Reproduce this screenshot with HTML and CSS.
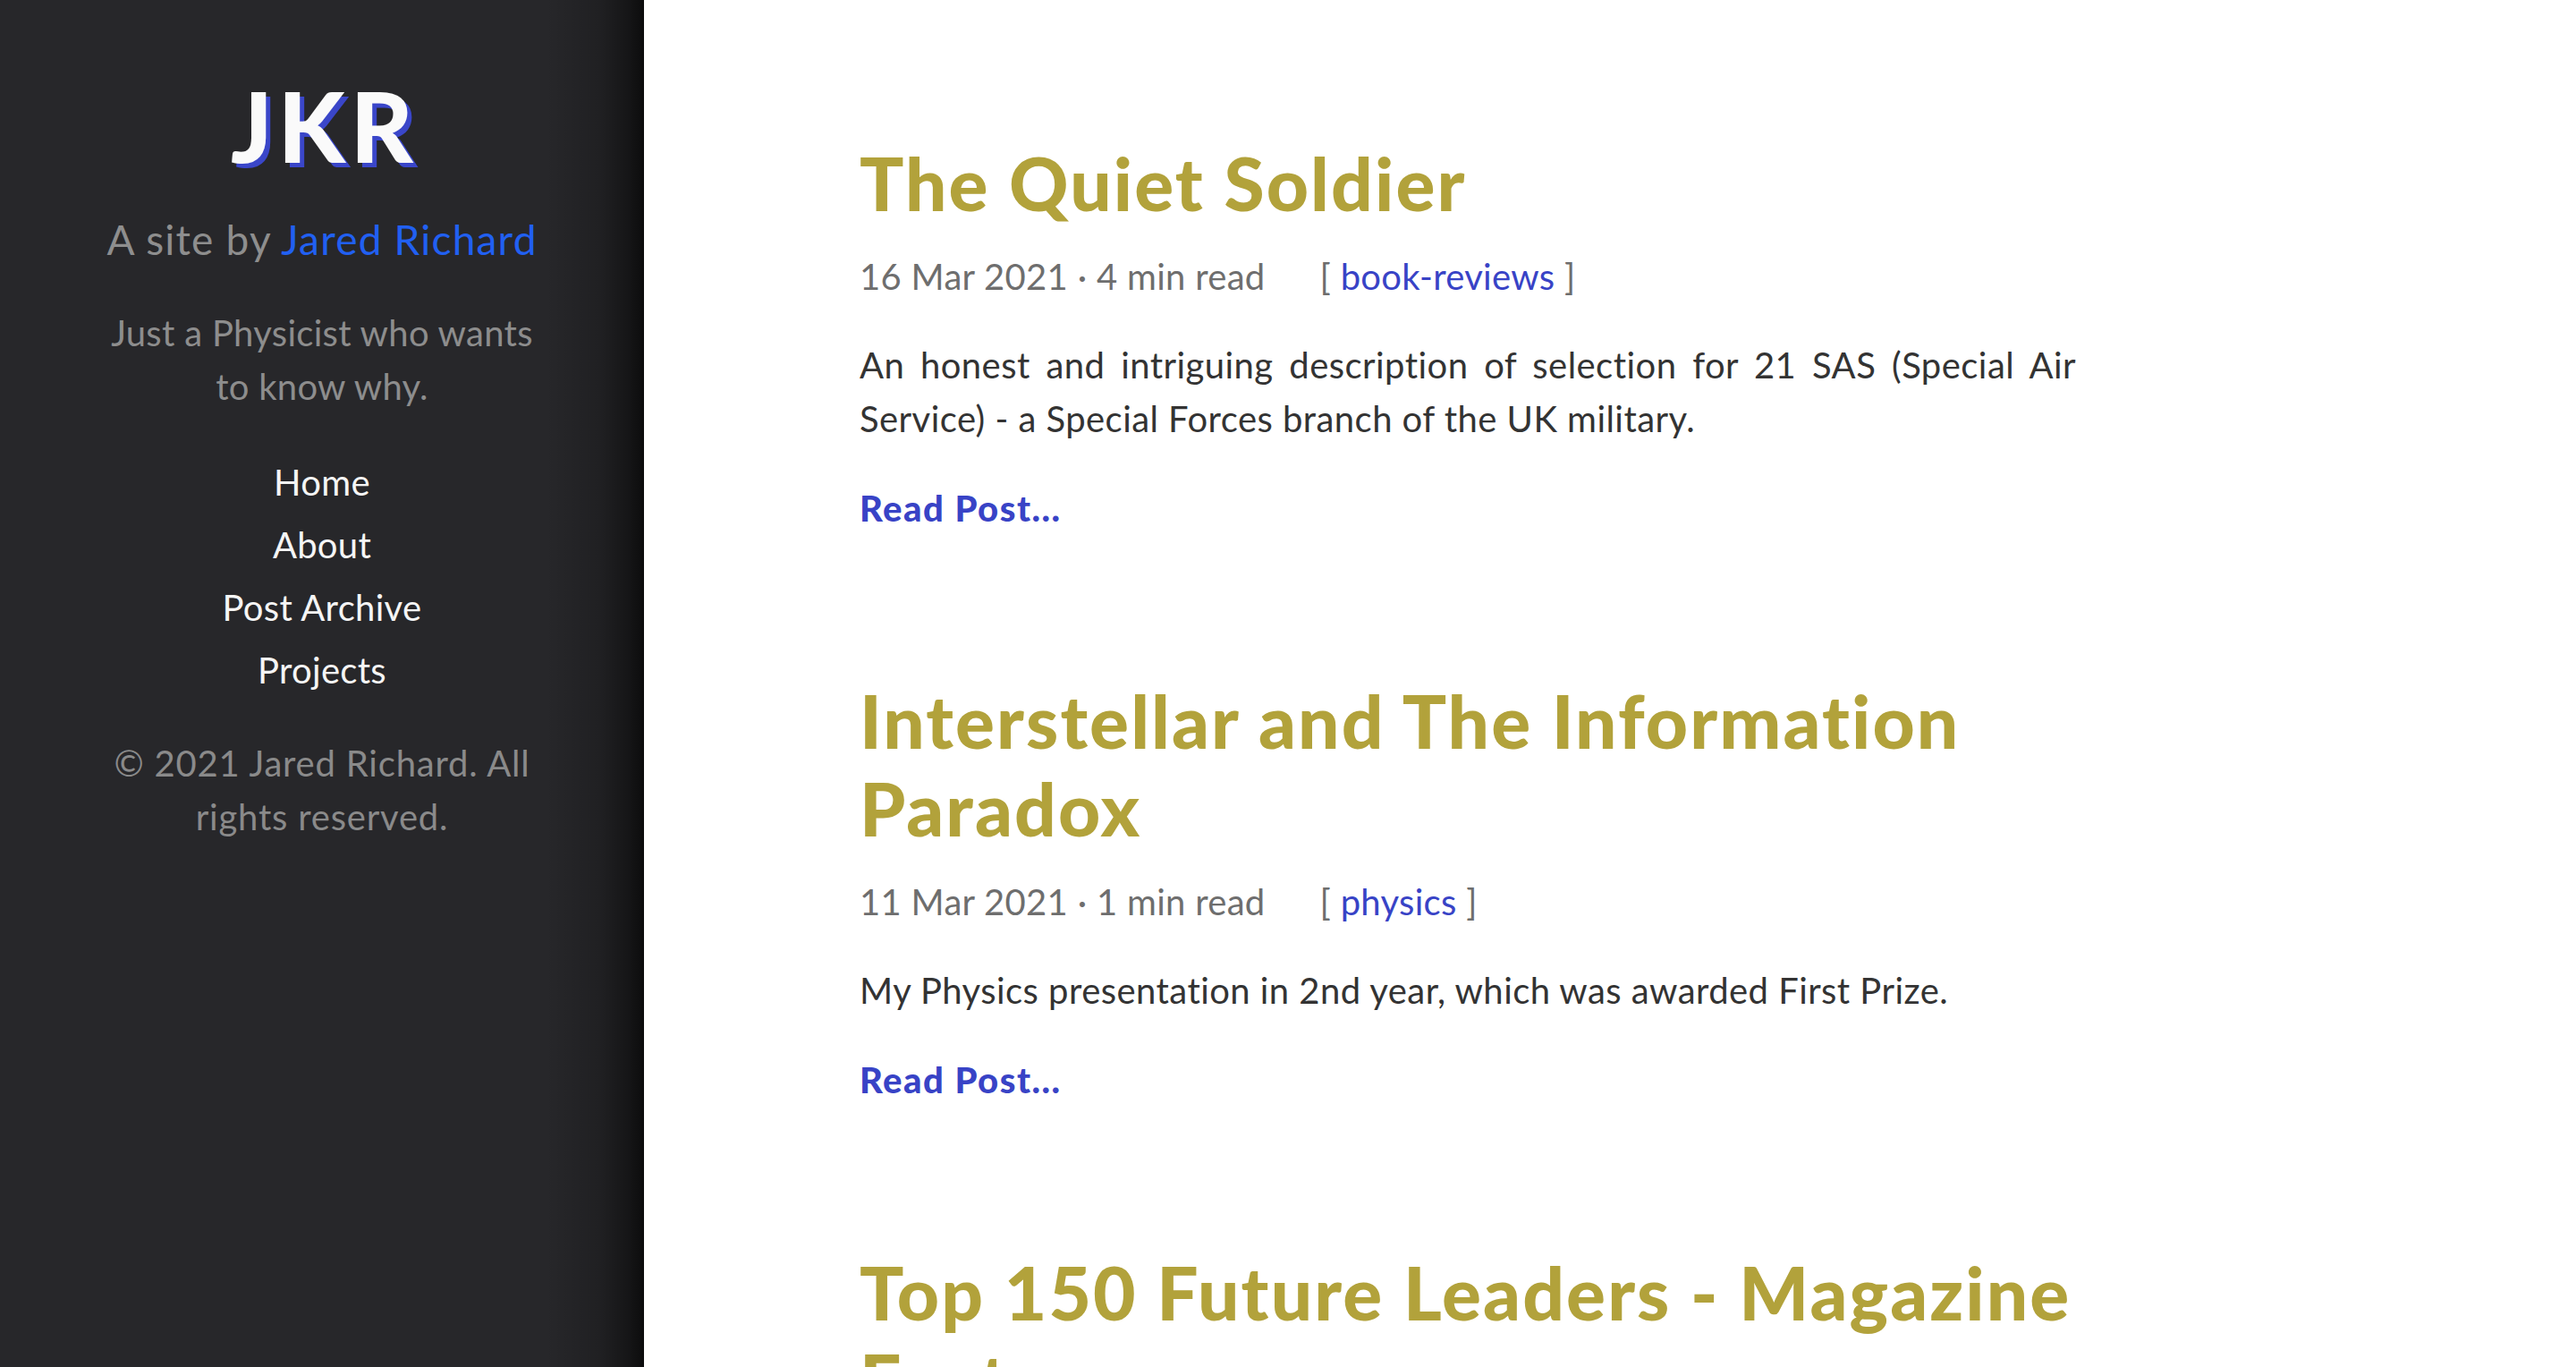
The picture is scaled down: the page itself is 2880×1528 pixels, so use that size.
FILE: index.html
```html
<!DOCTYPE html>
<html lang="en">
<head>
<meta charset="utf-8">
<title>JKR</title>
<link rel="stylesheet" href="styles.css">
</head>
<body>
<div class="layout">
  <aside class="sidebar">
    <h1 class="logo">JKR</h1>
    <p class="byline">A site by <a href="#">Jared Richard</a></p>
    <p class="tagline">Just a Physicist who wants to know why.</p>
    <nav class="nav">
      <a href="#">Home</a>
      <a href="#">About</a>
      <a href="#">Post Archive</a>
      <a href="#">Projects</a>
    </nav>
    <p class="copyright">© 2021 Jared Richard. All rights reserved.</p>
  </aside>
  <main class="main">
    <article class="post">
      <h2 class="post-title">The Quiet Soldier</h2>
      <div class="post-meta"><span class="date">16 Mar 2021 · 4 min read</span><span class="tags">[ <a href="#">book-reviews</a> ]</span></div>
      <p class="excerpt">An honest and intriguing description of selection for 21 SAS (Special Air Service) - a Special Forces branch of the UK military.</p>
      <a class="read-more" href="#">Read Post...</a>
    </article>
    <article class="post">
      <h2 class="post-title">Interstellar and The Information Paradox</h2>
      <div class="post-meta"><span class="date">11 Mar 2021 · 1 min read</span><span class="tags">[ <a href="#">physics</a> ]</span></div>
      <p class="excerpt">My Physics presentation in 2nd year, which was awarded First Prize.</p>
      <a class="read-more" href="#">Read Post...</a>
    </article>
    <article class="post">
      <h2 class="post-title">Top 150 Future Leaders - Magazine Feature</h2>
      <div class="post-meta"><span class="date">01 Mar 2021 · 1 min read</span><span class="tags">[ <a href="#">news</a> ]</span></div>
      <p class="excerpt">Featured in a magazine as one of the Top 150 Future Leaders.</p>
      <a class="read-more" href="#">Read Post...</a>
    </article>
  </main>
</div>
</body>
</html>
```

FILE: styles.css
```css
html, body {
  margin: 0;
  padding: 0;
  background: #ffffff;
}

body {
  font-family: "Lato", "Noto Sans", sans-serif;
  font-size: 40px;
  line-height: 60px;
  letter-spacing: 0.3px;
  color: #333333;
}

a {
  text-decoration: none;
}

.layout {
  display: flex;
  align-items: stretch;
  min-height: 100vh;
}

.sidebar {
  flex: 0 0 720px;
  box-sizing: border-box;
  min-height: 100vh;
  padding: 76px 110px 0;
  text-align: center;
  background:
    linear-gradient(to right,
      rgba(0, 0, 0, 0) 0,
      rgba(0, 0, 0, 0) calc(100% - 110px),
      rgba(0, 0, 0, 0.18) calc(100% - 50px),
      rgba(0, 0, 0, 0.45) calc(100% - 18px),
      rgba(0, 0, 0, 0.7) 100%),
    #27272a;
}

.logo {
  margin: 0;
  font-size: 108px;
  line-height: 1.2;
  font-weight: 900;
  letter-spacing: 6px;
  text-indent: 6px;
  color: #fafafa;
  text-shadow: 5px 5px 0 #3a46c9;
}

.byline {
  margin: 27px 0 0;
  font-size: 46px;
  line-height: 69px;
  letter-spacing: 1.2px;
  color: #8e8e8e;
}

.byline a {
  color: #2160f2;
}

.tagline {
  margin: 40px 0 0;
  color: #8d8d8d;
}

.nav {
  margin-top: 42px;
  display: flex;
  flex-direction: column;
  align-items: center;
}

.nav a {
  color: #f5f5f5;
  line-height: 70px;
}

.copyright {
  margin: 39px 0 0;
  letter-spacing: 0.8px;
  color: #8a8a8a;
}

.main {
  flex: 1 1 auto;
  padding: 155px 0 0 241px;
}

.post {
  max-width: 1360px;
  margin-bottom: 158px;
}

.post-title {
  margin: 0;
  font-size: 82px;
  line-height: 98px;
  font-weight: 900;
  letter-spacing: 2.1px;
  color: #b2a23b;
}

.post-meta {
  margin-top: 26px;
  color: #6e6e6e;
}

.post-meta .tags {
  margin-left: 61px;
}

.post-meta .tags a {
  color: #3843c6;
}

.excerpt {
  margin: 39px 0 0;
  text-align: justify;
  letter-spacing: 0.45px;
  color: #333333;
}

.read-more {
  display: block;
  margin-top: 40px;
  font-weight: 900;
  letter-spacing: 1.5px;
  color: #3843c6;
}
```
